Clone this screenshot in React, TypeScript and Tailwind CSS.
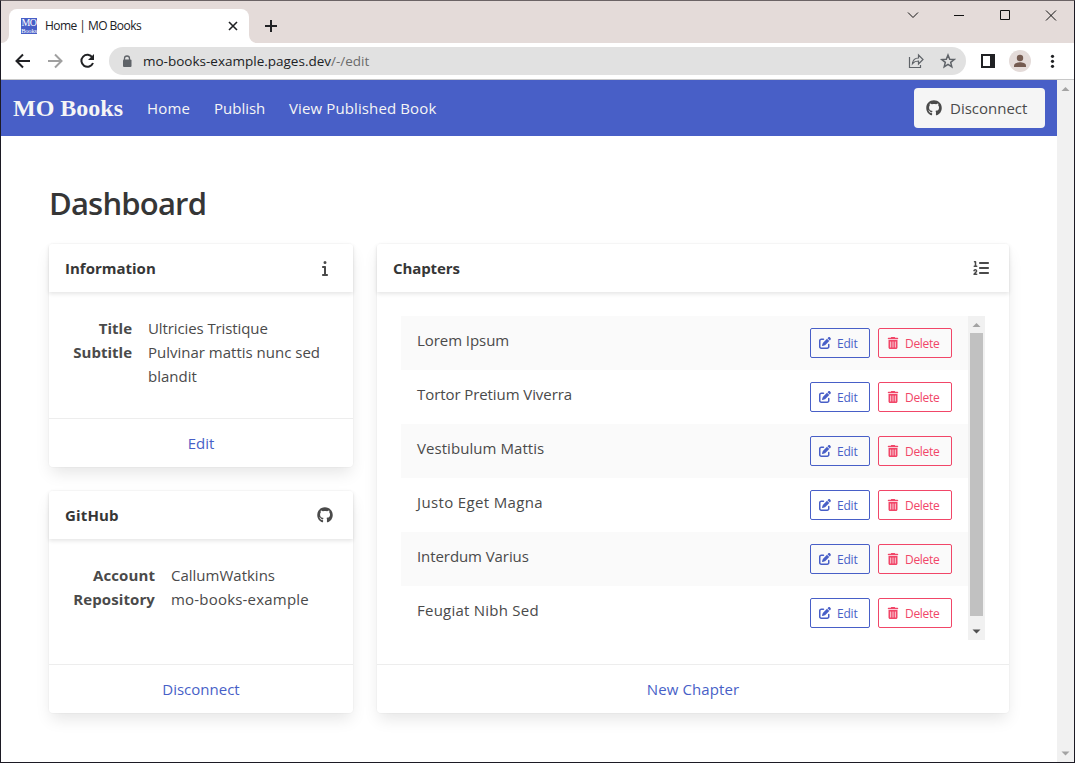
import React from "react";
import { FaGithub, FaInfo, FaListOl, FaPenToSquare, FaTrashCan } from "react-icons/fa6";

const chapters = [
  { name: "Lorem Ipsum", tracking: "tracking-[-0.06px]" },
  { name: "Tortor Pretium Viverra", tracking: "tracking-[-0.08px]" },
  { name: "Vestibulum Mattis", tracking: "tracking-[0.06px]" },
  { name: "Justo Eget Magna", tracking: "tracking-[0.36px]" },
  { name: "Interdum Varius", tracking: "tracking-[-0.08px]" },
  { name: "Feugiat Nibh Sed", tracking: "tracking-[0.24px]" },
];

const cardShadow = "rounded bg-white shadow-[0_8px_16px_-2px_rgba(10,10,10,0.1),0_0_0_1px_rgba(10,10,10,0.02)]";

function CardHeader({ title, tracking, children }: { title: string; tracking: string; children: React.ReactNode }) {
  return (
    <header className="flex h-12 shrink-0 items-center justify-between px-4 shadow-[0_2px_4px_rgba(10,10,10,0.1)]">
      <h2 className={`text-[15px] leading-6 font-bold text-[#363636] ${tracking}`}>{title}</h2>
      <span className="flex size-6 items-center justify-center text-base text-[#4a4a4a]">{children}</span>
    </header>
  );
}

function CardFooter({ label, tracking }: { label: string; tracking: string }) {
  return (
    <footer className="flex h-[49px] shrink-0 items-center justify-center border-t border-[#ededed] text-[#485fc7]">
      <a className={tracking}>{label}</a>
    </footer>
  );
}

function TitleBar() {
  return (
    <div className="flex h-[42px] shrink-0 bg-[#e4dbd9]">
      <div className="flex items-end">
        <div className="h-2 w-2 bg-white"><div className="h-2 w-2 rounded-br-lg bg-[#e4dbd9]" /></div>
        <div className="flex h-[34px] w-60 items-center rounded-t-lg bg-white pl-3">
          <div className="flex size-4 flex-col items-center overflow-hidden bg-[#485fc7] font-['Liberation_Serif',serif] text-white">
            <span className="text-[10px] leading-[10px] tracking-[-0.5px]">MO</span>
            <span className="text-[6.5px] leading-[5px] tracking-[-0.2px]">Books</span>
          </div>
          <span className="ml-2 flex-1 text-[12px] tracking-[-0.54px] text-[#202124]">Home | MO Books</span>
          <svg width="10" height="10" viewBox="0 0 10 10" className="mr-[11px]" stroke="#202124" strokeWidth="1.6"><path d="M1 1l8 8M9 1L1 9" /></svg>
        </div>
        <div className="h-2 w-2 bg-white"><div className="h-2 w-2 rounded-bl-lg bg-[#e4dbd9]" /></div>
      </div>
      <div className="flex items-center pt-2 pl-2">
        <svg width="12" height="12" viewBox="0 0 12 12" stroke="#202124" strokeWidth="2"><path d="M0 6h12M6 0v12" /></svg>
      </div>
      <div className="mr-2 ml-auto flex h-7 items-center">
        <svg width="184" height="28" viewBox="0 0 184 28" fill="none" stroke="#111">
          <path d="M26 11.500l5 5 5-5" />
          <path d="M72 14.500h10" />
          <path d="M118.500 9.500h9v9h-9z" />
          <path d="M164 9.500l10 10M174 9.500l-10 10" />
        </svg>
      </div>
    </div>
  );
}

function AddressBar() {
  return (
    <div className="flex h-[37px] shrink-0 items-center border-b border-[#c8c8c8] bg-white">
      <svg width="108" height="36" viewBox="0 0 108 36" fill="none" strokeWidth="2">
        <path d="M29 18H16.500M22 11.500L15.500 18l6.500 6.500" stroke="#202124" />
        <path d="M47 18h12.500M54 11.500l6.500 6.500-6.500 6.500" stroke="#a0a0a0" />
        <path d="M91.400 14.500A6 6 0 1 0 92 20" stroke="#202124" />
        <path d="M93 11v6h-6z" fill="#202124" />
      </svg>
      <div className="flex h-7 w-[857px] items-center rounded-full bg-[#e1e1e1] pr-2.5 pl-[13px]">
        <svg width="10" height="13" viewBox="0 0 10 13"><path d="M2.500 5V3.500a2.500 2.500 0 0 1 5 0V5" fill="none" stroke="#5f6368" strokeWidth="1.300" /><rect x="1" y="4.500" width="8.500" height="7.500" rx="1" fill="#5f6368" /></svg>
        <span className="ml-[11px] text-[13.5px] text-[#202124]">mo-books-example.pages.dev<span className="text-[#6b6b6b]">/-/edit</span></span>
        <svg className="ml-auto" width="48" height="18" viewBox="0 0 48 18" fill="none" stroke="#5f6368" strokeWidth="1.200">
          <path d="M1.500 5v10.500h11V13" />
          <path d="M4.500 11.500c.5-4 2.500-5.500 6-5.500V3l4.500 4.500-4.500 4.500V9C8 9 6 9.700 4.500 11.500z" />
          <path d="M40 3l1.700 4.200 4.500.3-3.500 2.900 1.100 4.400L40 12.400l-3.800 2.400 1.100-4.400-3.500-2.900 4.500-.3z" strokeWidth="1.500" />
        </svg>
      </div>
      <svg width="108" height="36" viewBox="0 0 108 36">
        <path d="M15 11h14v14H15z" fill="#202124" /><path d="M17 13h7v10h-7z" fill="#fff" />
        <circle cx="54" cy="18" r="11" fill="#e4dbd9" />
        <circle cx="54" cy="15" r="3.200" fill="#755b51" /><path d="M48 24v-1.500c0-2.300 3.500-3.300 6-3.300s6 1 6 3.300V24z" fill="#755b51" />
        <circle cx="86.500" cy="13.300" r="1.600" fill="#202124" /><circle cx="86.500" cy="18.300" r="1.600" fill="#202124" /><circle cx="86.500" cy="23.300" r="1.600" fill="#202124" />
      </svg>
    </div>
  );
}

function Arrow({ down, color }: { down?: boolean; color: string }) {
  return (
    <svg width="17" height="17" viewBox="0 0 17 17" fill={color}>
      {down ? <path d="M4.500 6.500h8L8.500 10.500z" /> : <path d="M4.500 11h8L8.500 7z" />}
    </svg>
  );
}

export default function App() {
  return (
    <div className="flex h-[763px] w-[1075px] flex-col overflow-hidden border border-[#1c1a24] border-t-[#6b6365] bg-white font-['Open_Sans',sans-serif] text-[15px] leading-6 text-[#4a4a4a]">
      <TitleBar />
      <AddressBar />
      <div className="flex min-h-0 flex-1">
        <div className="flex w-[1056px] shrink-0 flex-col">
          <nav className="flex h-14 shrink-0 items-center bg-[#485fc7] px-3 text-[#f5f5f5]">
            <span className="w-[134px] font-['Liberation_Serif',serif] text-[24px] font-bold">MO Books</span>
            <a className="w-[67px] tracking-[0.15px]">Home</a>
            <a className="w-[75px]">Publish</a>
            <a className="tracking-[0.12px]">View Published Book</a>
            <button className="ml-auto flex h-10 w-[131px] items-center rounded bg-[#f5f5f5] pl-3 text-[#4a4a4a]">
              <FaGithub className="mr-2 size-4" />
              <span>Disconnect</span>
            </button>
          </nav>
          <main className="flex flex-col px-12 pt-[47px]">
            <h1 className="h-10 text-[31px] leading-10 font-semibold tracking-[-0.8px] text-[#363636]">Dashboard</h1>
            <div className="mt-[21px] flex gap-6">
              <div className="flex w-[304px] flex-col gap-6">
                <section className={`flex h-[223px] flex-col ${cardShadow}`}>
                  <CardHeader title="Information" tracking=""><FaInfo /></CardHeader>
                  <dl className="grid flex-1 grid-cols-[59px_1fr] content-start gap-x-4 px-6 pt-6 pr-4">
                    <dt className="text-right font-bold">Title</dt>
                    <dd className="tracking-[-0.1px]">Ultricies Tristique</dd>
                    <dt className="text-right font-bold">Subtitle</dt>
                    <dd>Pulvinar mattis nunc sed<br />blandit</dd>
                  </dl>
                  <CardFooter label="Edit" tracking="" />
                </section>
                <section className={`flex h-[222px] flex-col ${cardShadow}`}>
                  <CardHeader title="GitHub" tracking="tracking-[0.15px]"><FaGithub /></CardHeader>
                  <dl className="grid flex-1 grid-cols-[82px_1fr] content-start gap-x-4 px-6 pt-6 pr-4">
                    <dt className="text-right font-bold tracking-[0.1px]">Account</dt>
                    <dd>CallumWatkins</dd>
                    <dt className="text-right font-bold tracking-[0.1px]">Repository</dt>
                    <dd className="tracking-[0.2px]">mo-books-example</dd>
                  </dl>
                  <CardFooter label="Disconnect" tracking="" />
                </section>
              </div>
              <section className={`flex h-[469px] w-[632px] flex-col ${cardShadow}`}>
                <CardHeader title="Chapters" tracking="tracking-[-0.1px]"><FaListOl /></CardHeader>
                <div className="flex flex-1 px-6 pt-6">
                  <ul className="h-[324px] flex-1">
                    {chapters.map(({ name, tracking }) => (
                      <li key={name} className="flex h-[54px] items-start px-4 pt-3 odd:bg-[#fafafa]">
                        <span className={`flex-1 ${tracking}`}>{name}</span>
                        <button className="mr-2 flex h-[30px] w-[60px] items-center rounded-[2px] border border-[#485fc7] pl-2 text-[12px] tracking-[-0.2px] text-[#485fc7]">
                          <FaPenToSquare className="mr-1.5 size-3" /><span className="pt-0.5">Edit</span>
                        </button>
                        <button className="flex h-[30px] w-[74px] items-center rounded-[2px] border border-[#f14668] pl-2 text-[12px] tracking-[-0.3px] text-[#f14668]">
                          <FaTrashCan className="mr-1.5 size-3" /><span className="pt-0.5">Delete</span>
                        </button>
                      </li>
                    ))}
                  </ul>
                  <div className="flex h-[324px] w-[17px] flex-col bg-[#f1f1f1]">
                    <Arrow color="#a3a3a3" />
                    <div className="mx-0.5 flex-1 bg-[#c1c1c1]" />
                    <div className="h-6 pt-[7px]"><Arrow down color="#505050" /></div>
                  </div>
                </div>
                <CardFooter label="New Chapter" tracking="tracking-[0.1px]" />
              </section>
            </div>
          </main>
        </div>
        <div className="flex flex-1 flex-col justify-between bg-[#f1f1f1]">
          <Arrow color="#a3a3a3" />
          <Arrow down color="#a3a3a3" />
        </div>
      </div>
    </div>
  );
}
